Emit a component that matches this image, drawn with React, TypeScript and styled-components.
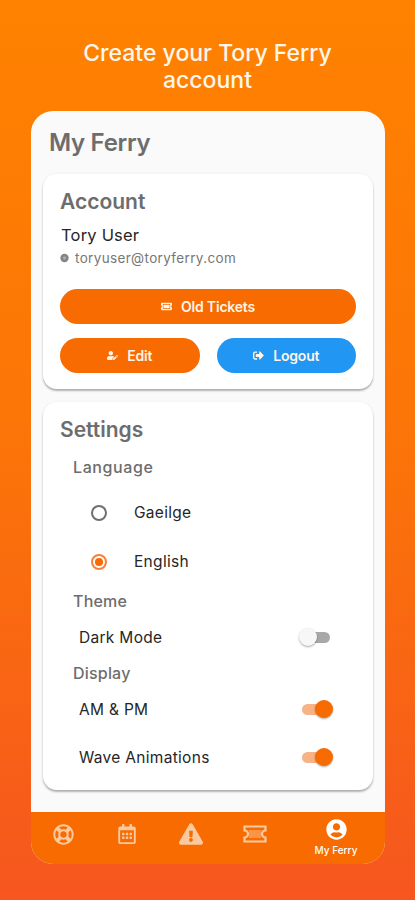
import React from "react"
import styled, { createGlobalStyle } from "styled-components"
import {
  FaExclamationTriangle,
  FaRegCalendarAlt,
  FaRegLifeRing,
  FaSignOutAlt,
  FaTicketAlt,
  FaUserCircle,
  FaUserEdit,
} from "react-icons/fa"

const orange = "#f76b00"
const labelGrey = "#6d6d6d"
const rowBlack = "#262626"

const GlobalStyle = createGlobalStyle`
  html, body {
    margin: 0;
    padding: 0;
  }
  body {
    font-family: Inter, "Open Sans", sans-serif;
  }
`

const Page = styled.div`
  box-sizing: border-box;
  width: 415px;
  height: 900px;
  overflow: hidden;
  padding-top: 40px;
  background: linear-gradient(180deg, #ff8200 0%, #fb7408 50%, #f6561f 100%);
`

const Title = styled.h1`
  margin: 0 auto 18px;
  width: 300px;
  height: 53px;
  color: #fff6ec;
  font-size: 23px;
  line-height: 26.5px;
  font-weight: 500;
  text-align: center;
`

const Phone = styled.div`
  width: 354px;
  height: 753px;
  margin-left: 31px;
  border-radius: 22px;
  background: #fafafa;
  overflow: hidden;
  display: flex;
  flex-direction: column;
`

const Body = styled.div`
  flex: 1;
  padding: 16px 12px 0;
  display: flex;
  flex-direction: column;
`

const Heading = styled.h2`
  margin: 0 0 15px 6px;
  color: ${labelGrey};
  font-size: 24px;
  line-height: 32px;
  font-weight: 600;
  letter-spacing: -0.3px;
`

const Card = styled.section<{ $height: number }>`
  box-sizing: border-box;
  height: ${(p) => p.$height}px;
  margin-bottom: 13px;
  padding: 14px 17px 0;
  border-radius: 14px;
  background: #fff;
  box-shadow: 0 2px 2px rgba(0, 0, 0, 0.28), 0 0 3px rgba(0, 0, 0, 0.06);
`

const CardTitle = styled.h3`
  margin: 0;
  color: ${labelGrey};
  font-size: 21px;
  line-height: 28px;
  font-weight: 600;
`

const UserName = styled.div`
  margin: 8px 0 0 1px;
  color: ${rowBlack};
  font-size: 16.5px;
  line-height: 22px;
  font-weight: 400;
  letter-spacing: 0.2px;
`

const EmailRow = styled.div`
  margin: 3px 0 22px;
  display: flex;
  align-items: center;
  gap: 3px;
  color: #777;
  font-size: 13.5px;
  line-height: 18px;
  letter-spacing: 0.35px;
`

const ButtonRow = styled.div`
  display: flex;
  gap: 17px;
  margin-bottom: 14px;
`

const PillButton = styled.button<{ $blue?: boolean }>`
  flex: 1;
  height: 35px;
  padding: 0;
  border: none;
  border-radius: 18px;
  background: ${(p) => (p.$blue ? "#2196f3" : orange)};
  color: #fdf4ea;
  font-family: inherit;
  font-size: 14px;
  font-weight: 600;
  letter-spacing: -0.2px;
  display: flex;
  align-items: center;
  justify-content: center;
  gap: 9px;
  svg {
    font-size: 11px;
  }
`

const GroupLabel = styled.div<{ $top: number; $tracking?: number }>`
  margin: ${(p) => p.$top}px 0 0 13px;
  color: ${labelGrey};
  font-size: 16px;
  line-height: 22px;
  font-weight: 500;
  letter-spacing: ${(p) => p.$tracking ?? 0.2}px;
`

const RadioGroup = styled.div`
  padding-top: 10px;
`

const RadioRow = styled.div`
  height: 49px;
  padding-left: 31px;
  display: flex;
  align-items: center;
  gap: 27px;
  color: ${rowBlack};
  font-size: 15.5px;
  letter-spacing: 0.3px;
`

const RadioDot = styled.span<{ $on?: boolean }>`
  box-sizing: border-box;
  width: 16px;
  height: 16px;
  border-radius: 50%;
  border: 2px solid ${(p) => (p.$on ? "#f7803a" : "#6f6f6f")};
  display: flex;
  align-items: center;
  justify-content: center;
  &::after {
    content: "";
    display: ${(p) => (p.$on ? "block" : "none")};
    width: 8px;
    height: 8px;
    border-radius: 50%;
    background: ${orange};
  }
`

const SwitchRow = styled.div<{ $height: number }>`
  height: ${(p) => p.$height}px;
  padding: 0 26px 0 19px;
  display: flex;
  align-items: center;
  justify-content: space-between;
  color: ${rowBlack};
  font-size: 15.5px;
  letter-spacing: 0.3px;
`

const Track = styled.span<{ $on?: boolean }>`
  position: relative;
  width: 28px;
  height: 11px;
  border-radius: 6px;
  background: ${(p) => (p.$on ? "#f8b284" : "#a8a8a8")};
`

const Thumb = styled.span<{ $on?: boolean }>`
  position: absolute;
  top: -3.5px;
  ${(p) => (p.$on ? "right: -3px;" : "left: -3px;")}
  width: 18px;
  height: 18px;
  border-radius: 50%;
  background: ${(p) => (p.$on ? orange : "#f7f7f7")};
  box-shadow: 0 1px 2px rgba(0, 0, 0, 0.35);
`

const Nav = styled.nav`
  height: 52px;
  flex-shrink: 0;
  background: ${orange};
  display: flex;
  align-items: flex-start;
`

const NavItem = styled.div<{ $size?: number }>`
  flex: 0 0 64px;
  height: 44px;
  display: flex;
  align-items: center;
  justify-content: center;
  color: #f9c9a0;
  svg {
    font-size: ${(p) => p.$size ?? 21}px;
    display: block;
  }
`

const ActiveNavItem = styled.div`
  flex: 1;
  padding-top: 7px;
  display: flex;
  flex-direction: column;
  align-items: center;
  gap: 4px;
  color: #fff;
  font-size: 10px;
  line-height: 13px;
  font-weight: 500;
  svg {
    font-size: 21px;
    display: block;
  }
`

const EmailBadge = () => (
  <svg width="12" height="12" viewBox="0 0 12 12">
    <circle cx="4.5" cy="6" r="4.2" fill="#858585" />
    <circle cx="4.5" cy="6" r="1.4" fill="#b4b4b4" />
  </svg>
)

const TicketOutline = () => (
  <svg width="24" height="18" viewBox="0 0 24 18" fill="none" stroke="currentColor" strokeWidth="2.2">
    <path d="M1.5 1.5h21v4a3.5 3.5 0 0 0 0 7v4h-21v-4a3.5 3.5 0 0 0 0-7z" />
    <rect x="6" y="5" width="12" height="8" fill="currentColor" fillOpacity="0.45" stroke="none" />
  </svg>
)

const App: React.FC = () => (
  <Page>
    <GlobalStyle />
    <Title>Create your Tory Ferry account</Title>
    <Phone>
      <Body>
        <Heading>My Ferry</Heading>
        <Card $height={215}>
          <CardTitle>Account</CardTitle>
          <UserName>Tory User</UserName>
          <EmailRow>
            <EmailBadge />
            toryuser@toryferry.com
          </EmailRow>
          <ButtonRow>
            <PillButton>
              <FaTicketAlt />
              Old Tickets
            </PillButton>
          </ButtonRow>
          <ButtonRow>
            <PillButton>
              <FaUserEdit />
              Edit
            </PillButton>
            <PillButton $blue>
              <FaSignOutAlt />
              Logout
            </PillButton>
          </ButtonRow>
        </Card>
        <Card $height={388}>
          <CardTitle>Settings</CardTitle>
          <GroupLabel $top={12} $tracking={0.6}>
            Language
          </GroupLabel>
          <RadioGroup>
            <RadioRow>
              <RadioDot />
              Gaeilge
            </RadioRow>
            <RadioRow>
              <RadioDot $on />
              English
            </RadioRow>
          </RadioGroup>
          <GroupLabel $top={4}>Theme</GroupLabel>
          <SwitchRow $height={50}>
            Dark Mode
            <Track>
              <Thumb />
            </Track>
          </SwitchRow>
          <GroupLabel $top={0}>Display</GroupLabel>
          <SwitchRow $height={50}>
            AM &amp; PM
            <Track $on>
              <Thumb $on />
            </Track>
          </SwitchRow>
          <SwitchRow $height={46}>
            Wave Animations
            <Track $on>
              <Thumb $on />
            </Track>
          </SwitchRow>
        </Card>
      </Body>
      <Nav>
        <NavItem>
          <FaRegLifeRing />
        </NavItem>
        <NavItem $size={20}>
          <FaRegCalendarAlt />
        </NavItem>
        <NavItem $size={24}>
          <FaExclamationTriangle />
        </NavItem>
        <NavItem>
          <TicketOutline />
        </NavItem>
        <ActiveNavItem>
          <FaUserCircle />
          My Ferry
        </ActiveNavItem>
      </Nav>
    </Phone>
  </Page>
)

export default App
